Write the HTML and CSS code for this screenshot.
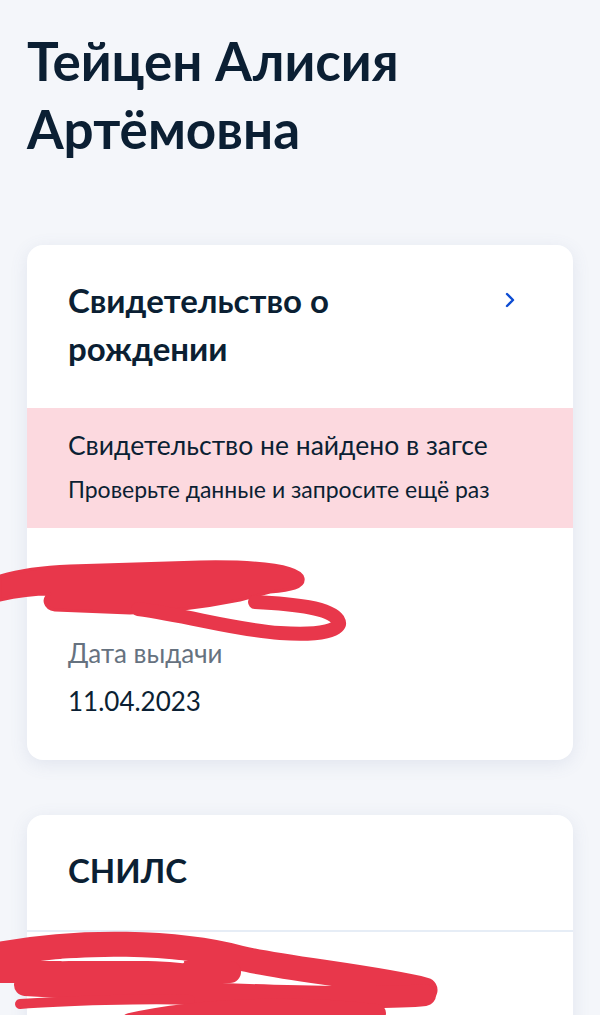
FILE: index.html
```html
<!DOCTYPE html>
<html lang="ru">
<head>
    <meta charset="UTF-8">
    <meta name="viewport" content="width=device-width, initial-scale=1.0">
    <title>Документы</title>
    <link rel="stylesheet" href="styles.css">
</head>
<body>
    <main class="page">
        <h1 class="person-name">Тейцен Алисия Артёмовна</h1>

        <section class="doc-card">
            <div class="doc-head">
                <h2 class="doc-title">Свидетельство о рождении</h2>
                <svg class="chevron" width="14" height="16" viewBox="0 0 14 16">
                    <path d="M4 2 L10 8 L4 14" fill="none" stroke="#0d4cd3" stroke-width="2.4" stroke-linecap="round" stroke-linejoin="round"/>
                </svg>
            </div>
            <div class="doc-alert">
                <p class="alert-title">Свидетельство не найдено в загсе</p>
                <p class="alert-text">Проверьте данные и запросите ещё раз</p>
            </div>
            <div class="doc-fields">
                <div class="field field-hidden"></div>
                <div class="field">
                    <span class="field-label">Дата выдачи</span>
                    <span class="field-value">11.04.2023</span>
                </div>
            </div>
        </section>

        <section class="doc-card">
            <div class="doc-head doc-head-line">
                <h2 class="doc-title">СНИЛС</h2>
            </div>
            <div class="doc-fields">
                <div class="field field-hidden"></div>
            </div>
        </section>
    </main>

    <!-- красные зачёркивания поверх личных данных -->
    <svg class="scribbles" width="600" height="1015" viewBox="0 0 600 1015">
        <g fill="#e8374b" stroke="#e8374b" stroke-linecap="round" stroke-linejoin="round">
            <path d="M0 576 C 20 570 45 567 70 566 L 200 562 C 260 561 300 566 303 578 C 305 588 290 590 270 592 L 240 600 C 200 608 160 612 130 613 L 55 610 C 44 608 42 598 50 594 C 35 594 18 596 0 600 Z" stroke-width="3"/>
            <path d="M138 609 C 190 616 235 630 280 633 C 320 636 344 630 338 620 C 330 608 295 604 255 602" fill="none" stroke-width="14"/>
            <path d="M-10 956 C 80 938 180 942 240 958 C 280 968 380 978 425 990" fill="none" stroke-width="25"/>
            <path d="M425 995 C 380 1000 200 995 25 985" fill="none" stroke-width="22"/>
            <path d="M-10 972 L 230 972" fill="none" stroke-width="22"/>
            <path d="M20 1004 C 60 1001 150 998 190 1000" fill="none" stroke-width="10"/>
            <path d="M130 1022 C 200 1006 300 1004 377 1013" fill="none" stroke-width="18"/>
        </g>
        <path d="M62 960 C 100 958 150 959 183 962" fill="none" stroke="#fff" stroke-width="2.5" stroke-linecap="round"/>
    </svg>
</body>
</html>
```

FILE: styles.css
```css
body {
    margin: 0;
    background-color: #f4f6fa;
    font-family: Lato, "Noto Sans", sans-serif;
    color: #0b1f33;
}

.page {
    padding: 27px 27px 0;
}

.person-name {
    margin: 0 0 82px;
    font-size: 53px;
    line-height: 68px;
    font-weight: 700;
}

.doc-card {
    background-color: #fff;
    border-radius: 16px;
    box-shadow: 0 4px 18px rgba(90, 110, 160, 0.12);
    overflow: hidden;
    margin-bottom: 55px;
}

.doc-head {
    display: flex;
    justify-content: space-between;
    align-items: flex-start;
    padding: 31px 56px 36px 41px;
}

.doc-head-line {
    border-bottom: 2px solid #e6edf6;
}

.doc-title {
    margin: 0;
    max-width: 340px;
    font-size: 33px;
    line-height: 48px;
    font-weight: 700;
}

.chevron {
    margin-top: 16px;
}

.doc-alert {
    background-color: #fcd9df;
    padding: 20px 41px 24px;
}

.doc-alert p {
    margin: 0;
}

.alert-title {
    font-size: 26.5px;
    line-height: 34px;
}

.alert-text {
    margin-top: 12px !important;
    font-size: 23px;
    line-height: 30px;
}

.doc-fields {
    padding: 0 41px 43px;
}

.field {
    display: flex;
    flex-direction: column;
    gap: 16px;
}

.field-hidden {
    height: 109px;
}

.field-label {
    font-size: 26px;
    line-height: 32px;
    color: #66727f;
}

.field-value {
    font-size: 26px;
    line-height: 32px;
}

.scribbles {
    position: absolute;
    top: 0;
    left: 0;
    pointer-events: none;
}
```
